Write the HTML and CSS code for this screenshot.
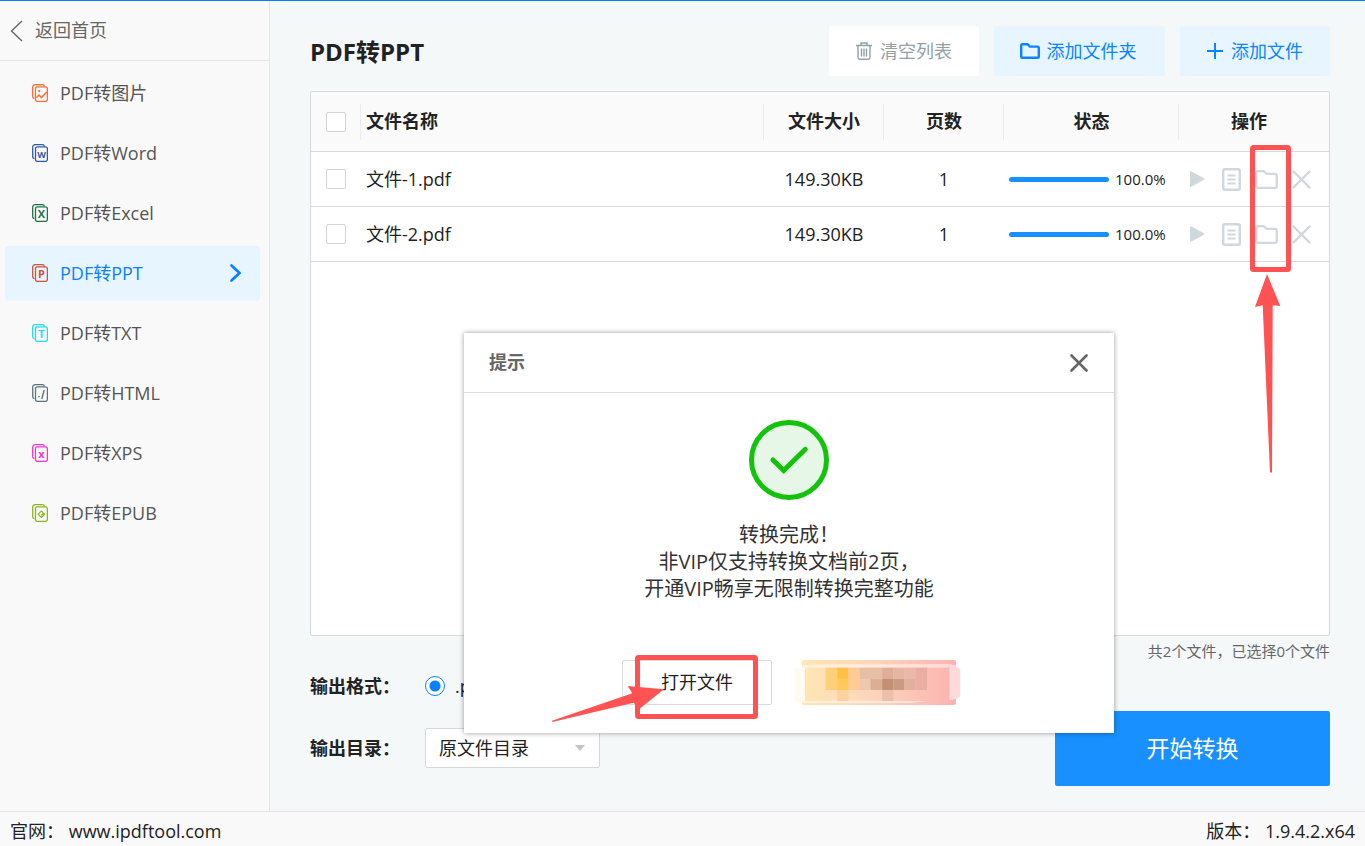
FILE: index.html
```html
<!DOCTYPE html>
<html lang="zh-CN">
<head>
  <meta charset="UTF-8">
  <meta name="viewport" content="width=device-width, initial-scale=1">
  <title>PDF转PPT</title>
  <link rel="stylesheet" href="styles.css">
</head>
<body>
<svg class="defs" aria-hidden="true">
  <symbol id="pages" viewBox="0 0 16 18">
    <rect x="3.5" y="2.8" width="11.9" height="14.6" rx="2" fill="none" stroke="currentColor" stroke-width="1.3"/>
    <path d="M2.4 14.6C1.3 14.4.7 13.7.7 12.7V3A2.3 2.3 0 0 1 3 .7h7.4c1.2 0 1.9.7 2.1 1.8" fill="none" stroke="currentColor" stroke-width="1.3"/>
  </symbol>
  <symbol id="play" viewBox="0 0 16 18">
    <path d="M1 1.8v14.4q0 1 1 .6l13-7.1q.8-.7 0-1.4L2 1.200Q1 .8 1 1.800z" fill="currentColor"/>
  </symbol>
  <symbol id="doc" viewBox="0 0 19 23">
    <rect x="1.200" y="1.200" width="16.600" height="20.600" rx="1.5" fill="none" stroke="currentColor" stroke-width="2.400"/>
    <path d="M5.500 7.500h8M5.500 11.500h8M5.500 15.500h8" stroke="currentColor" stroke-width="2"/>
  </symbol>
  <symbol id="folder" viewBox="0 0 23 19">
    <path d="M1.200 16V3q0-1.800 1.800-1.800h5q1 0 1.600.7l1.300 1.400q.5.5 1.200.5H20q1.800 0 1.800 1.800V16q0 1.800-1.800 1.800H3q-1.800 0-1.800-1.800z" fill="none" stroke="currentColor" stroke-width="2.300"/>
  </symbol>
  <symbol id="cross" viewBox="0 0 19 19">
    <path d="M1.500 1.500l16 16M17.500 1.500l-16 16" stroke="currentColor" stroke-width="2.400" stroke-linecap="round"/>
  </symbol>
</svg>

<div class="app">
  <aside class="sidebar">
    <a class="back" href="#">
      <svg width="13" height="22" viewBox="0 0 13 22"><path d="M12 1L1.5 11 12 21" fill="none" stroke="#666" stroke-width="1.4"/></svg>
      返回首页
    </a>
    <nav class="menu">
      <a class="menu-item" href="#">
        <svg class="icon-image" width="16" height="18"><use href="#pages"/><circle cx="7.2" cy="7.2" r="1.1" fill="currentColor"/><path d="M4.5 13.5L7 11l2.400 2.600L14.800 8" fill="none" stroke="currentColor" stroke-width="1.5"/></svg>
        PDF转图片
      </a>
      <a class="menu-item" href="#">
        <svg class="icon-word" width="16" height="18"><use href="#pages"/><text class="tight" x="9.500" y="13.500">W</text></svg>
        PDF转Word
      </a>
      <a class="menu-item" href="#">
        <svg class="icon-excel" width="16" height="18"><use href="#pages"/><text x="9.500" y="14">X</text></svg>
        PDF转Excel
      </a>
      <a class="menu-item active" href="#">
        <svg class="icon-ppt" width="16" height="18"><use href="#pages"/><text x="9.500" y="14">P</text></svg>
        PDF转PPT
        <svg class="arrow" width="11" height="18" viewBox="0 0 11 18"><path d="M1.500 1.500L9.500 9l-8 7.500" fill="none" stroke="currentColor" stroke-width="2.600" stroke-linecap="round"/></svg>
      </a>
      <a class="menu-item" href="#">
        <svg class="icon-txt" width="16" height="18"><use href="#pages"/><text x="9.500" y="14">T</text></svg>
        PDF转TXT
      </a>
      <a class="menu-item" href="#">
        <svg class="icon-html" width="16" height="18"><use href="#pages"/><path d="M6.200 12.600h1.500M12.200 6l-2.400 9" fill="none" stroke="currentColor" stroke-width="1.400"/></svg>
        PDF转HTML
      </a>
      <a class="menu-item" href="#">
        <svg class="icon-xps" width="16" height="18"><use href="#pages"/><text x="9.500" y="13.500">x</text></svg>
        PDF转XPS
      </a>
      <a class="menu-item" href="#">
        <svg class="icon-epub" width="16" height="18"><use href="#pages"/><path d="M11 8.600L9.400 7 6.200 10.200l3.200 3.200 3.200-3.200-1-1-2.200 2" fill="none" stroke="currentColor" stroke-width="1.200"/></svg>
        PDF转EPUB
      </a>
    </nav>
  </aside>

  <main class="main">
    <header class="header">
      <h1>PDF转PPT</h1>
      <button class="tool-btn clear" type="button">
        <svg width="16" height="18" viewBox="0 0 16 18"><path d="M0 3.500h16M5 3V1h6v2M2 4v11.500q0 1.700 1.700 1.700h8.600q1.700 0 1.700-1.700V4M5.500 6.500v8M8 6.500v8M10.500 6.500v8" fill="none" stroke="currentColor" stroke-width="1.400"/></svg>
        清空列表
      </button>
      <button class="tool-btn wide" type="button">
        <svg width="20" height="16" viewBox="0 0 20 16"><path d="M1.200 13.500V2.500q0-1.300 1.300-1.300h5l2.500 2.400h7.500q1.300 0 1.300 1.300v8.600q0 1.300-1.300 1.300h-15q-1.300 0-1.300-1.300z" fill="none" stroke="currentColor" stroke-width="2.400"/></svg>
        添加文件夹
      </button>
      <button class="tool-btn" type="button">
        <svg width="16" height="16" viewBox="0 0 16 16"><path d="M8 0v16M0 8h16" stroke="currentColor" stroke-width="2"/></svg>
        添加文件
      </button>
    </header>

    <section class="files">
      <table>
        <thead>
        <tr>
          <th class="col-check"><input type="checkbox" aria-label="全选"></th>
          <th class="col-name">文件名称</th>
          <th class="col-size">文件大小</th>
          <th class="col-pages">页数</th>
          <th class="col-status">状态</th>
          <th class="col-actions">操作</th>
        </tr>
        </thead>
        <tbody>
        <tr>
          <td><input type="checkbox" aria-label="文件-1.pdf"></td>
          <td class="name">文件-1.pdf</td>
          <td>149.30KB</td>
          <td>1</td>
          <td><div class="status"><div class="bar"><div class="bar-fill" style="width: 100%"></div></div>100.0%</div></td>
          <td>
            <div class="actions">
              <button type="button" aria-label="开始"><svg width="16" height="18"><use href="#play"/></svg></button>
              <button type="button" aria-label="打开文件"><svg width="19" height="23"><use href="#doc"/></svg></button>
              <button type="button" aria-label="打开目录"><svg width="23" height="19"><use href="#folder"/></svg></button>
              <button type="button" aria-label="删除"><svg width="19" height="19"><use href="#cross"/></svg></button>
            </div>
          </td>
        </tr>
        <tr>
          <td><input type="checkbox" aria-label="文件-2.pdf"></td>
          <td class="name">文件-2.pdf</td>
          <td>149.30KB</td>
          <td>1</td>
          <td><div class="status"><div class="bar"><div class="bar-fill" style="width: 100%"></div></div>100.0%</div></td>
          <td>
            <div class="actions">
              <button type="button" aria-label="开始"><svg width="16" height="18"><use href="#play"/></svg></button>
              <button type="button" aria-label="打开文件"><svg width="19" height="23"><use href="#doc"/></svg></button>
              <button type="button" aria-label="打开目录"><svg width="23" height="19"><use href="#folder"/></svg></button>
              <button type="button" aria-label="删除"><svg width="19" height="19"><use href="#cross"/></svg></button>
            </div>
          </td>
        </tr>
        </tbody>
      </table>
      <svg class="mark mark-folder" width="41" height="328" viewBox="0 0 41 328">
        <rect x="2.5" y="2.5" width="36" height="122" rx="1"/>
        <path d="M17 129l13.300 32-7.600-.8L22 327.500h-2L12.700 160.200 5 162z"/>
      </svg>
    </section>
    <p class="count">共2个文件，已选择0个文件</p>

    <section class="output">
      <div class="options">
        <div class="option">
          <span class="option-label">输出格式：</span>
          <label class="radio"><input type="radio" name="format" checked>.pptx</label>
        </div>
        <div class="option">
          <label class="option-label" for="dir">输出目录：</label>
          <div class="select">
            <select id="dir">
              <option>原文件目录</option>
            </select>
          </div>
        </div>
      </div>
      <button class="start" type="button">开始转换</button>
    </section>

    <div class="dialog" role="dialog" aria-labelledby="dialog-title">
      <div class="dialog-head">
        <h2 id="dialog-title">提示</h2>
        <button class="close" type="button" aria-label="关闭"><svg width="18" height="18" viewBox="0 0 18 18"><path d="M1.5 1.5l15 15M16.5 1.5l-15 15" stroke="currentColor" stroke-width="2.6" stroke-linecap="round"/></svg></button>
      </div>
      <div class="dialog-body">
        <svg width="80" height="80" viewBox="0 0 80 80">
          <circle cx="40" cy="40" r="37.5" fill="#e7f7e7" stroke="#13c20a" stroke-width="5"/>
          <path d="M24 40l10.7 10.5L56.3 29.3" fill="none" stroke="#13c20a" stroke-width="5" stroke-linecap="round"/>
        </svg>
        <p>转换完成！<br>非VIP仅支持转换文档前2页，<br>开通VIP畅享无限制转换完整功能</p>
        <div class="dialog-btns">
          <button class="open" type="button">打开文件</button>
          <button class="vip" type="button" aria-label="开通VIP">
            <svg width="168" height="45" viewBox="760 60 505 135">
              <path d="M764 84h32v98l-32 4z" fill="#fffaf2"/>
              <path d="M786 76q70-4 150-3 150 0 294-1v11H786zM786 183q180-3 380 1l-50 5H786z" fill="#fff" opacity=".5"/>
              <path d="M1230 72q33 6 33 22v70q0 12-33 17z" fill="#ffdada"/>
              <g>
                <path d="M858 83h35v67h-35z" fill="#ffcf79"/>
                <path d="M893 83h34v34h-34z" fill="#ffc045"/>
                <path d="M893 117h34v33h-34z" fill="#ffc95c"/>
                <path d="M927 83h33v67h-33z" fill="#ffca94"/>
                <path d="M893 150h34v33h-34z" fill="#fbd39f"/>
                <path d="M960 83h68v34h-68z" fill="#e7bfa6"/>
                <path d="M960 117h33v33h-33z" fill="#ecc8b0"/>
                <path d="M993 117h35v33h-35z" fill="#dcae93"/>
                <path d="M1028 83h34v34h-34z" fill="#dfae98"/>
                <path d="M1062 83h33v34h-33z" fill="#e6b5a4"/>
                <path d="M1028 117h34v33h-34z" fill="#c49074"/>
                <path d="M1062 117h33v33h-33z" fill="#cb9a82"/>
                <path d="M1028 150h34v33h-34z" fill="#ecbfa9"/>
                <path d="M1095 83h33v34h-33z" fill="#ebb8a9"/>
                <path d="M1095 117h33v33h-33z" fill="#e2b09f"/>
                <path d="M1128 83h35v67h-35z" fill="#e9afa3"/>
              </g>
            </svg>
          </button>
        </div>
      </div>
      <svg class="mark mark-open" width="207" height="68" viewBox="0 0 207 68">
        <rect x="85.5" y="2.5" width="118" height="59" rx="1"/>
        <path d="M112 34.3L75.700 31l4.600 7.300L0 65.700l.3 1.300L81.700 47.700l5.600 6.300z"/>
      </svg>
    </div>
  </main>
</div>

<footer class="footer">
  <span>官网： <a href="#">www.ipdftool.com</a></span>
  <span>版本： 1.9.4.2.x64</span>
</footer>
</body>
</html>
```
FILE: styles.css
```css
* {
  box-sizing: border-box;
}

body {
  display: flex;
  flex-direction: column;
  min-height: 100vh;
  margin: 0;
  border-top: 1px solid #007fff;
  background: #f4f8f9;
  color: #222;
  font-family: "Open Sans", "Noto Sans CJK SC", sans-serif;
  font-size: 18px;
  line-height: 27px;
}

h1, h2, p {
  margin: 0;
}

a {
  color: inherit;
  text-decoration: none;
}

button, select, input {
  margin: 0;
  font: inherit;
  color: inherit;
}

button {
  padding: 0;
  border: 0;
  background: none;
  cursor: pointer;
}

svg {
  display: block;
  flex: none;
}

.defs {
  position: absolute;
  width: 0;
  height: 0;
}

.app {
  display: flex;
  flex: 1;
}

/* sidebar */
.sidebar {
  flex: 0 0 270px;
  border-right: 1px solid #e3e7e8;
  background: #f9f9f9;
}

.back {
  display: flex;
  align-items: center;
  gap: 12px;
  height: 60px;
  padding-left: 10px;
  border-bottom: 1px solid #e5e5e5;
  color: #666;
}

.menu {
  display: flex;
  flex-direction: column;
  gap: 5px;
  padding: 5px 9px 5px 5px;
}

.menu-item {
  display: flex;
  align-items: center;
  gap: 12px;
  height: 55px;
  padding: 0 19px 1px 27px;
  border-radius: 4px;
  color: #555;
}

.menu-item.active {
  background: #e6f5ff;
  color: #0a80ff;
}

.menu-item text {
  fill: currentColor;
  font-size: 11px;
  font-weight: bold;
  text-anchor: middle;
}

.menu-item .tight {
  font-size: 9px;
}

.arrow {
  margin-left: auto;
}

.icon-image { color: #ff6a33; }
.icon-word { color: #2f5ca8; }
.icon-excel { color: #217346; }
.icon-ppt { color: #d2523a; }
.icon-txt { color: #18e0f5; }
.icon-html { color: #5d7580; }
.icon-xps { color: #f436d0; }
.icon-epub { color: #8ab818; }

/* main */
.main {
  position: relative;
  display: flex;
  flex: 1;
  flex-direction: column;
  min-width: 0;
  padding: 25px 35px 25px 40px;
}

.header {
  display: flex;
  align-items: center;
  gap: 15px;
  margin-bottom: 15px;
}

.header h1 {
  flex: 1;
  font-size: 24px;
}

.tool-btn {
  display: flex;
  align-items: center;
  justify-content: center;
  gap: 8px;
  width: 150px;
  height: 50px;
  border-radius: 2px;
  background: #e6f5ff;
  color: #0a85ff;
}

.tool-btn.wide {
  gap: 7px;
  width: 171px;
  padding-right: 3px;
}

.tool-btn.clear {
  background: #fff;
  color: #93a1a6;
}

.files {
  position: relative;
  flex: 1;
  border: 1px solid #d6d9da;
  border-radius: 2px;
  background: #fff;
}

table {
  width: 100%;
  border-collapse: separate;
  border-spacing: 0;
  table-layout: fixed;
}

th, td {
  height: 55px;
  padding: 0;
  border-bottom: 1px solid #d9d9d9;
  text-align: center;
}

th {
  height: 60px;
  background: linear-gradient(#ebebeb, #ebebeb) right center / 1px 36px no-repeat #fafafa;
}

th:last-child {
  padding-right: 10px;
  background: #fafafa;
}

.col-check { width: 50px; }
.col-size, .col-pages { width: 120px; }
.col-status { width: 175px; }
.col-actions { width: 150px; }

.col-name, .name {
  padding-left: 5px;
  text-align: left;
}

input[type=checkbox] {
  display: block;
  width: 20px;
  height: 20px;
  margin: 0 auto;
  border: 1px solid #d4d4d4;
  border-radius: 2px;
  background: #fff;
  appearance: none;
}

.status {
  display: flex;
  align-items: center;
  gap: 6px;
  padding-left: 5px;
  font-size: 15px;
}

.bar {
  width: 100px;
  height: 5px;
}

.bar-fill {
  height: 100%;
  border-radius: 3px;
  background: #1890ff;
}

.actions {
  display: flex;
}

.actions button {
  display: flex;
  align-items: center;
  justify-content: center;
  width: 35px;
  height: 30px;
  color: #cfd8dd;
}

.count {
  height: 30px;
  color: #666;
  font-size: 15px;
  line-height: 30px;
  text-align: right;
}

.output {
  display: flex;
  justify-content: space-between;
  height: 120px;
}

.options {
  display: flex;
  flex-direction: column;
  gap: 22px;
}

.option {
  display: flex;
  align-items: center;
  height: 40px;
}

.option-label {
  width: 115px;
  font-weight: bold;
}

.radio {
  display: flex;
  align-items: center;
  gap: 10px;
}

.radio input {
  width: 20px;
  height: 20px;
  border: 1px solid #0a80ff;
  border-radius: 50%;
  background: radial-gradient(#0a80ff 5px, #fff 6px);
  appearance: none;
}

.select {
  position: relative;
}

.select::after {
  content: "";
  position: absolute;
  top: 17px;
  right: 15px;
  border: 5px solid transparent;
  border-top: 6px solid #c4c4c4;
  border-bottom: 0;
  pointer-events: none;
}

.select select {
  display: block;
  width: 175px;
  height: 40px;
  padding: 0 13px;
  border: 1px solid #d6d9da;
  border-radius: 2px;
  background: #fff;
  appearance: none;
}

.start {
  align-self: flex-end;
  width: 275px;
  height: 75px;
  border-radius: 2px;
  background: #1890ff;
  color: #fff;
  font-size: 23px;
}

/* dialog */
.dialog {
  position: absolute;
  top: 332px;
  left: 194px;
  width: 650px;
  height: 400px;
  background: #fff;
  box-shadow: 0 0 5px rgba(0, 0, 0, .4);
}

.dialog-head {
  display: flex;
  align-items: center;
  justify-content: space-between;
  height: 60px;
  padding: 0 26px 0 25px;
  border-bottom: 1px solid #dcdcdc;
  color: #666;
}

.dialog-head h2 {
  font-size: 18px;
}

.dialog-body {
  display: flex;
  flex-direction: column;
  align-items: center;
  padding-top: 27px;
  color: #333;
}

.dialog-body p {
  margin: 21px 0 58px;
  font-size: 20px;
  text-align: center;
}

.dialog-btns {
  display: flex;
  gap: 30px;
}

.open {
  width: 150px;
  height: 45px;
  border: 1px solid #d9d9d9;
  border-radius: 2px;
  color: #222;
}

.vip {
  width: 154px;
  height: 45px;
  border-radius: 2px;
  background: linear-gradient(90deg, #ffe6b3, #fbd3bb 50%, #fdb2b0);
}

.vip svg {
  margin: 0 -9px;
}

/* red marks */
.mark {
  position: absolute;
  fill: #ff5252;
  pointer-events: none;
}

.mark rect {
  fill: none;
  stroke: #ff5252;
  stroke-width: 5px;
}

.mark-folder {
  top: 53px;
  right: 38px;
}

.mark-open {
  top: 322px;
  left: 88px;
}

/* footer */
.footer {
  display: flex;
  justify-content: space-between;
  height: 35px;
  padding: 6px 10px 0;
  border-top: 1px solid #e3e5e6;
  background: #f9f9f9;
}
```
